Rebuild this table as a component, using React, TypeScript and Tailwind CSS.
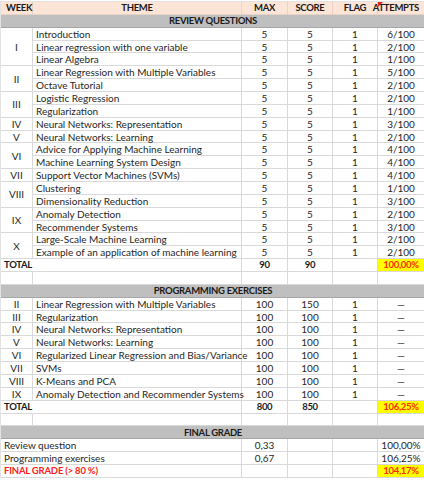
const font = { fontFamily: "Lato, 'Liberation Sans', sans-serif" };

type Group = { week: string; themes: string[]; attempts: string[] };

const review: Group[] = [
  { week: "I", themes: ["Introduction", "Linear regression with one variable", "Linear Algebra"], attempts: ["6/100", "2/100", "1/100"] },
  { week: "II", themes: ["Linear Regression with Multiple Variables", "Octave Tutorial"], attempts: ["5/100", "2/100"] },
  { week: "III", themes: ["Logistic Regression", "Regularization"], attempts: ["2/100", "1/100"] },
  { week: "IV", themes: ["Neural Networks: Representation"], attempts: ["3/100"] },
  { week: "V", themes: ["Neural Networks: Learning"], attempts: ["2/100"] },
  { week: "VI", themes: ["Advice for Applying Machine Learning", "Machine Learning System Design"], attempts: ["4/100", "4/100"] },
  { week: "VII", themes: ["Support Vector Machines (SVMs)"], attempts: ["4/100"] },
  { week: "VIII", themes: ["Clustering", "Dimensionality Reduction"], attempts: ["1/100", "3/100"] },
  { week: "IX", themes: ["Anomaly Detection", "Recommender Systems"], attempts: ["2/100", "3/100"] },
  { week: "X", themes: ["Large-Scale Machine Learning", "Example of an application of machine learning"], attempts: ["2/100", "2/100"] },
];

const programming = [
  ["II", "Linear Regression with Multiple Variables", "150"],
  ["III", "Regularization", "100"],
  ["IV", "Neural Networks: Representation", "100"],
  ["V", "Neural Networks: Learning", "100"],
  ["VI", "Regularized Linear Regression and Bias/Variance", "100"],
  ["VII", "SVMs", "100"],
  ["VIII", "K-Means and PCA", "100"],
  ["IX", "Anomaly Detection and Recommender Systems", "100"],
];

const spans: Record<number, string> = { 1: "row-span-1", 2: "row-span-2", 3: "row-span-3" };

const cell = "border-r border-b border-[#d9d9d9] flex items-center whitespace-nowrap overflow-visible";
const center = cell + " justify-center";
const left = cell + " pl-[3px]";
const bold = "font-bold text-[9.5px] tracking-[-0.3px] text-[#1a1a1a]";
const hi = "bg-[#ffff00] font-bold text-[9.5px] tracking-[-0.3px] text-[#ff2a00]";

function Band({ label }: { label: string }) {
  return (
    <div className={`col-span-6 bg-[#bfbfbf] border-b border-[#a6a6a6] flex items-center justify-center ${bold}`}>
      {label}
    </div>
  );
}

function Empty() {
  return (
    <>
      <div className={cell} />
      <div className={cell} />
      <div className={cell} />
      <div className={cell} />
      <div className={cell} />
      <div className={cell} />
    </>
  );
}

export default function App() {
  return (
    <div className="w-[424px] h-[481px] bg-white overflow-hidden text-[10px] leading-none text-[#262626]" style={font}>
      <div className="h-[2px] border-b border-[#e3e3e3]" />
      <div className="grid grid-cols-[32px_209px_46px_45px_45px_47px] auto-rows-[12.87px] border-l border-[#e3e3e3]">
        {/* header */}
        <div className={`bg-[#fce4d6] border-b border-r border-[#e8d3c6] flex items-center pl-[5px] ${bold}`}>WEEK</div>
        <div className={`bg-[#fce4d6] border-b border-r border-[#e8d3c6] flex items-center justify-center ${bold}`}>THEME</div>
        <div className={`bg-[#fce4d6] border-b border-r border-[#e8d3c6] flex items-center justify-center ${bold}`}>MAX</div>
        <div className={`bg-[#fce4d6] border-b border-r border-[#e8d3c6] flex items-center justify-center ${bold}`}>SCORE</div>
        <div className={`bg-[#fce4d6] border-b border-r border-[#e8d3c6] flex items-center justify-center ${bold}`}>FLAG</div>
        <div className={`relative bg-[#fce4d6] border-b border-[#e8d3c6] flex items-center justify-end pr-[6px] ${bold}`}>
          <span className="absolute left-0 top-0 w-0 h-0 border-t-[5px] border-t-[#e02020] border-r-[5px] border-r-transparent" />
          ATTEMPTS
        </div>

        <Band label="REVIEW QUESTIONS" />
        {review.map((g) =>
          g.themes.map((t, i) => (
            <>
              {i === 0 && (
                <div className={`${spans[g.themes.length]} ${center}`}>{g.week}</div>
              )}
              <div className={left}>{t}</div>
              <div className={center}>5</div>
              <div className={center}>5</div>
              <div className={center}>1</div>
              <div className={center}>{g.attempts[i]}</div>
            </>
          ))
        )}
        <div className={`col-span-2 ${cell} pl-[3px] ${bold}`}>TOTAL</div>
        <div className={`${center} ${bold}`}>90</div>
        <div className={`${center} ${bold}`}>90</div>
        <div className={center} />
        <div className={`${center} ${hi}`}>100,00%</div>
        <Empty />

        <Band label="PROGRAMMING EXERCISES" />
        {programming.map(([w, t, s]) => (
          <>
            <div className={center}>{w}</div>
            <div className={left}>{t}</div>
            <div className={center}>100</div>
            <div className={center}>{s}</div>
            <div className={center}>1</div>
            <div className={center}>—</div>
          </>
        ))}
        <div className={`col-span-2 ${cell} pl-[3px] ${bold}`}>TOTAL</div>
        <div className={`${center} ${bold}`}>800</div>
        <div className={`${center} ${bold}`}>850</div>
        <div className={center} />
        <div className={`${center} ${hi}`}>106,25%</div>
        <Empty />

        <Band label="FINAL GRADE" />
        <div className={`col-span-2 ${cell} pl-[3px]`}>Review question</div>
        <div className={center}>0,33</div>
        <div className={center} />
        <div className={center} />
        <div className={center}>100,00%</div>
        <div className={`col-span-2 ${cell} pl-[3px]`}>Programming exercises</div>
        <div className={center}>0,67</div>
        <div className={center} />
        <div className={center} />
        <div className={center}>106,25%</div>
        <div className={`col-span-2 ${cell} pl-[3px] font-bold text-[9.5px] tracking-[-0.2px] text-[#ff2020]`}>FINAL GRADE (&gt; 80 %)</div>
        <div className={center} />
        <div className={center} />
        <div className={center} />
        <div className={`${center} ${hi}`}>104,17%</div>
      </div>
    </div>
  );
}
